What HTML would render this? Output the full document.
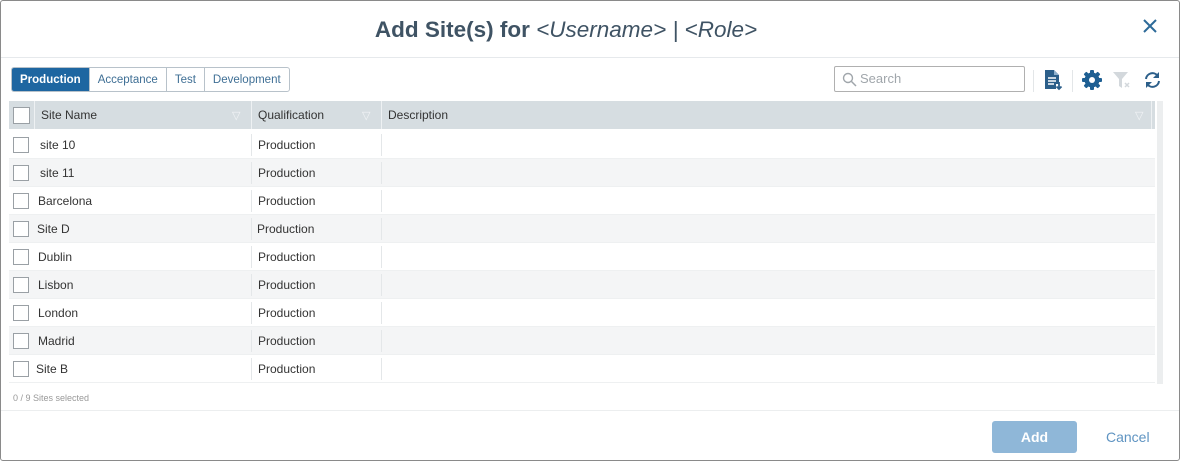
<!DOCTYPE html>
<html><head><meta charset="utf-8"><style>
*{box-sizing:border-box;margin:0;padding:0}
body{width:1180px;height:461px;overflow:hidden;background:#fff;font-family:"Liberation Sans",sans-serif;position:relative}
.frame{position:absolute;left:0;top:0;width:1180px;height:461px;border:1px solid #8a8a8a;border-radius:3px}
.hdr{position:absolute;left:1px;top:1px;width:1178px;height:57px;border-bottom:1px solid #e6e9ec}
.title{position:absolute;left:0;width:1130px;top:16px;text-align:center;font-size:22.5px;color:#3f5364}
.title b{font-weight:bold}
.title i{font-weight:normal}
.close{position:absolute;left:1141px;top:17px}
.tabs{position:absolute;left:11px;top:67px;height:25px;border:1px solid #b8c2ca;border-radius:3px;display:flex;overflow:hidden;font-size:11.5px;color:#3f6f95}
.tabs div{padding:0 8px;height:23px;line-height:25px;border-left:1px solid #b8c2ca}
.tabs div:first-child{border:none;background:#1e66a1;color:#fff;font-weight:bold}
.search{position:absolute;left:834px;top:66px;width:191px;height:26px;border:1px solid #b0b0b0;border-radius:2px;font-size:13px;color:#a0a6ab;line-height:24px;padding-left:25px}
.vs{position:absolute;top:70px;width:1px;height:22px;background:#e3e6e8}
.tbl{position:absolute;left:9px;top:101px;width:1146px}
.th{height:28px;background:#d6dde1;position:relative;font-size:12px;color:#333;margin-bottom:2px}
.row{height:28px;position:relative;font-size:12px;color:#333;border-bottom:1px solid #eef0f1}
.row.alt{background:#f4f5f6}
.cb{position:absolute;left:4px;top:6px;width:16px;height:16px;border:1px solid #9aa0a5;background:#fff}
.th .cb{left:4px;top:6px;width:17px;height:17px}
.c1{position:absolute;left:29px;top:7px}
.c2{position:absolute;left:249px;top:7px}
.c3{position:absolute;left:379px;top:7px}
.sep{position:absolute;top:3px;width:1px;height:22px;background:#e4e7e9}
.th .sep{background:#eef1f3;top:0;height:28px}
.f{position:absolute;top:8px;font-size:11px;color:#f2f4f6}
.sb{position:absolute;left:1157px;top:101px;width:6px;height:283px;background:#eceeef}
.cnt{position:absolute;left:13px;top:393px;font-size:9px;color:#999}
.fsep{position:absolute;left:1px;top:410px;width:1178px;height:1px;background:#eceeef}
.add{position:absolute;left:992px;top:421px;width:85px;height:32px;background:#8fb7d8;border-radius:3px;color:#fff;font-weight:bold;font-size:14px;text-align:center;line-height:32px}
.cancel{position:absolute;left:1106px;top:429px;font-size:14px;color:#5f94c2}
</style></head><body>
<div class="frame"></div>
<div class="hdr">
<div class="title"><b>Add Site(s) for</b> <i>&lt;Username&gt; | &lt;Role&gt;</i></div>
<svg class="close" width="16" height="16" viewBox="0 0 16 16"><path d="M2 2L14 14M14 2L2 14" stroke="#2d6a99" stroke-width="2"/></svg>
</div>
<div class="tabs"><div>Production</div><div>Acceptance</div><div>Test</div><div>Development</div></div>
<div class="search">Search</div>
<svg style="position:absolute;left:842px;top:72px" width="15" height="15" viewBox="0 0 15 15"><circle cx="6" cy="6" r="4.5" fill="none" stroke="#a0a6ab" stroke-width="1.4"/><path d="M9.5 9.5L14 14" stroke="#a0a6ab" stroke-width="1.5"/></svg>
<div class="vs" style="left:1033px"></div>
<svg style="position:absolute;left:1043px;top:69px" width="20" height="22" viewBox="0 0 20 22"><path d="M2 1h9l5 5v9h-3v5H2z" fill="#2c5f8a"/><path d="M11 1v5h5" fill="#8fb0cc"/><path d="M5 9h8M5 12h8M5 15h6" stroke="#fff" stroke-width="1.5"/><path d="M16 13v7M13.5 17.5L16 20l2.5-2.5" stroke="#2c5f8a" stroke-width="1.8" fill="none"/></svg>
<div class="vs" style="left:1072px"></div>
<svg style="position:absolute;left:1081px;top:69px" width="22" height="22" viewBox="0 0 22 22"><g fill="#1e5f93"><circle cx="11" cy="11" r="7.5"/><rect x="9" y="1" width="4" height="20" rx="1"/><rect x="9" y="1" width="4" height="20" rx="1" transform="rotate(45 11 11)"/><rect x="9" y="1" width="4" height="20" rx="1" transform="rotate(90 11 11)"/><rect x="9" y="1" width="4" height="20" rx="1" transform="rotate(135 11 11)"/></g><circle cx="11" cy="11" r="3" fill="#fff"/></svg>
<svg style="position:absolute;left:1112px;top:70px" width="20" height="20" viewBox="0 0 20 20"><path d="M1 2h15l-6 7v9l-3-2V9z" fill="#d3d8dc"/><path d="M13 13l4 4M17 13l-4 4" stroke="#d3d8dc" stroke-width="1.5"/></svg>
<svg style="position:absolute;left:1143px;top:71px" width="19" height="18" viewBox="0 0 19 18"><path d="M3 8a6.5 6.5 0 0 1 11.5-3.5" fill="none" stroke="#2c5f8a" stroke-width="2"/><path d="M16 1v6h-6z" fill="#2c5f8a"/><path d="M16 10a6.5 6.5 0 0 1-11.5 3.5" fill="none" stroke="#2c5f8a" stroke-width="2"/><path d="M3 17v-6h6z" fill="#2c5f8a"/></svg>
<div class="tbl">
<div class="th"><div class="cb"></div><div class="sep" style="left:25px"></div><span class="c1" style="left:32px">Site Name</span><span class="f" style="left:223px">&#9661;</span><div class="sep" style="left:242px"></div><span class="c2">Qualification</span><span class="f" style="left:353px">&#9661;</span><div class="sep" style="left:372px"></div><span class="c3">Description</span><span class="f" style="left:1126px">&#9661;</span><div class="sep" style="left:1142px"></div></div>
<div class="row"><div class="cb"></div><div class="sep" style="left:242px"></div><div class="sep" style="left:372px"></div><span class="c1" style="left:31px">site 10</span><span class="c2">Production</span></div>
<div class="row alt"><div class="cb"></div><div class="sep" style="left:242px"></div><div class="sep" style="left:372px"></div><span class="c1" style="left:31px">site 11</span><span class="c2">Production</span></div>
<div class="row"><div class="cb"></div><div class="sep" style="left:242px"></div><div class="sep" style="left:372px"></div><span class="c1">Barcelona</span><span class="c2">Production</span></div>
<div class="row alt"><div class="cb"></div><div class="sep" style="left:242px"></div><div class="sep" style="left:372px"></div><span class="c1" style="left:28px">Site D</span><span class="c2" style="left:248px">Production</span></div>
<div class="row"><div class="cb"></div><div class="sep" style="left:242px"></div><div class="sep" style="left:372px"></div><span class="c1">Dublin</span><span class="c2">Production</span></div>
<div class="row alt"><div class="cb"></div><div class="sep" style="left:242px"></div><div class="sep" style="left:372px"></div><span class="c1">Lisbon</span><span class="c2">Production</span></div>
<div class="row"><div class="cb"></div><div class="sep" style="left:242px"></div><div class="sep" style="left:372px"></div><span class="c1">London</span><span class="c2">Production</span></div>
<div class="row alt"><div class="cb"></div><div class="sep" style="left:242px"></div><div class="sep" style="left:372px"></div><span class="c1">Madrid</span><span class="c2">Production</span></div>
<div class="row"><div class="cb"></div><div class="sep" style="left:242px"></div><div class="sep" style="left:372px"></div><span class="c1" style="left:27px">Site B</span><span class="c2">Production</span></div>
</div>
<div class="sb"></div>
<div class="cnt">0 / 9 Sites selected</div>
<div class="fsep"></div>
<div class="add">Add</div>
<div class="cancel">Cancel</div>
</body></html>
